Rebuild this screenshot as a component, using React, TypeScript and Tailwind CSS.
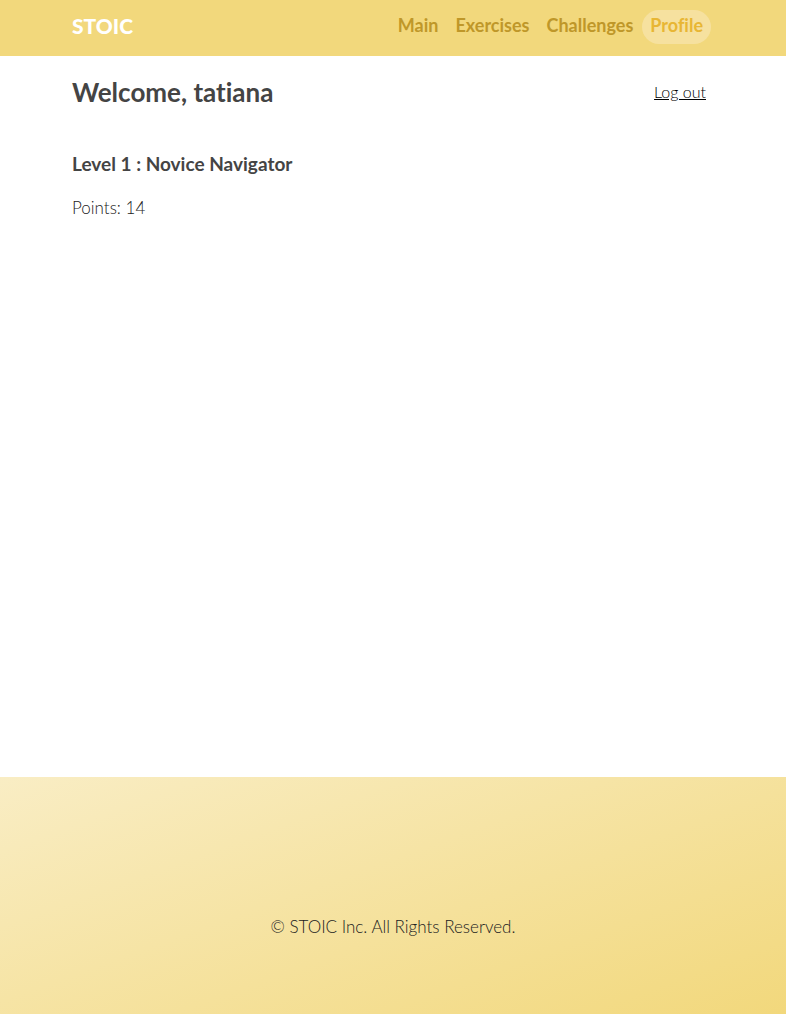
import React from "react";

const links = ["Main", "Exercises", "Challenges", "Profile"];

export default function App() {
  return (
    <div className="flex min-h-screen flex-col bg-white font-['Lato',sans-serif] text-[#444444] [font-variant-ligatures:none]">
      <header className="flex h-14 items-start justify-between bg-[#f2d87c] pr-[75px] pl-[72px]">
        <a href="#main" className="mt-3 text-[21px] leading-7 font-black text-white">STOIC</a>
        <nav className="mt-[10px] flex gap-px">
          {links.map((name) => (
            <a
              key={name}
              href={`#${name.toLowerCase()}`}
              aria-current={name === "Profile" ? "page" : undefined}
              className={
                name === "Profile"
                  ? "h-[34px] rounded-full bg-[#f6e19f] px-2 text-lg leading-[30px] font-bold text-[#e8b634]"
                  : "h-[34px] px-2 text-lg leading-[30px] font-bold text-[#bf9729]"
              }
            >
              {name}
            </a>
          ))}
        </nav>
      </header>
      <main className="flex-1 pr-20 pl-[72px]">
        <div className="flex items-center justify-between pt-5">
          <h1 className="text-[26px] leading-8 font-bold">Welcome, tatiana</h1>
          <button type="button" className="text-base leading-6 font-light text-black underline">Log out</button>
        </div>
        <h2 className="mt-11 text-[19px] leading-6 font-bold">Level 1 : Novice Navigator</h2>
        <p className="mt-5 text-[17px] leading-6 font-light text-[#222222]">Points: 14</p>
      </main>
      <footer className="flex h-[237px] justify-center bg-linear-[160deg,#f9edc4,#f2d87c] pt-[138px]">
        <p className="text-[17px] leading-6 font-light text-[#222222]">© STOIC Inc. All Rights Reserved.</p>
      </footer>
    </div>
  );
}
